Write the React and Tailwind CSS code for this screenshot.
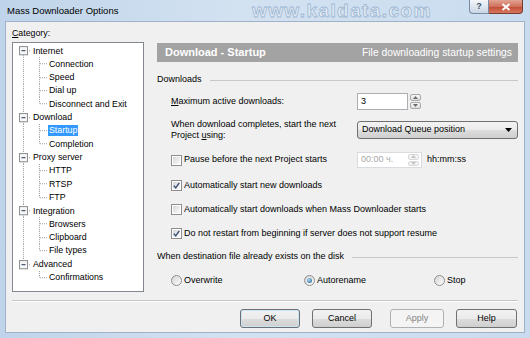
import React from "react";

const tree = [
  { label: "Internet", children: ["Connection", "Speed", "Dial up", "Disconnect and Exit"] },
  { label: "Download", children: ["Startup", "Completion"] },
  { label: "Proxy server", children: ["HTTP", "RTSP", "FTP"] },
  { label: "Integration", children: ["Browsers", "Clipboard", "File types"] },
  { label: "Advanced", children: ["Confirmations"] },
];

// tree gutter pieces
function RootCell({ first, last }) {
  return (
    <svg viewBox="0 0 16 13" preserveAspectRatio="none" className="h-full w-[16px] shrink-0">
      <line x1="8.5" y1={first ? 6.5 : 0} x2="8.5" y2={last ? 6.5 : 13} stroke="#a0a0a0" strokeDasharray="1 1" />
      <line x1="12" y1="6.5" x2="16" y2="6.5" stroke="#a0a0a0" strokeDasharray="1 1" />
      <rect x="4.5" y="2.5" width="8" height="8" fill="#f6f6f6" stroke="#8e8f8f" />
      <line x1="6.5" y1="6.5" x2="10.5" y2="6.5" stroke="#2a3d5a" />
    </svg>
  );
}

function PassCell({ show }) {
  return (
    <svg viewBox="0 0 16 13" preserveAspectRatio="none" className="h-full w-[16px] shrink-0">
      {show && <line x1="8.5" y1="0" x2="8.5" y2="13" stroke="#a0a0a0" strokeDasharray="1 1" />}
    </svg>
  );
}

function ChildCell({ last }) {
  return (
    <svg viewBox="0 0 17 13" preserveAspectRatio="none" className="h-full w-[17px] shrink-0">
      <line x1="8.5" y1="0" x2="8.5" y2={last ? 6.5 : 13} stroke="#a0a0a0" strokeDasharray="1 1" />
      <line x1="9" y1="6.5" x2="16" y2="6.5" stroke="#a0a0a0" strokeDasharray="1 1" />
    </svg>
  );
}

function Check({ checked }) {
  return (
    <span className="flex h-[11px] w-[11px] shrink-0 border border-[#8f8f8f] bg-white p-[1px]">
      <span className="flex h-full w-full items-center justify-center bg-gradient-to-br from-[#d8d8d8] to-[#fafafa]">
        {checked && (
          <svg width="7" height="7" viewBox="0 0 7 7">
            <path d="M0.8 3.6 L2.7 5.8 L6.3 0.8" fill="none" stroke="#3a4f78" strokeWidth="1.4" />
          </svg>
        )}
      </span>
    </span>
  );
}

function Radio({ on }) {
  return (
    <span className="flex h-[11px] w-[11px] shrink-0 items-center justify-center rounded-full border border-[#8f8f8f] bg-gradient-to-br from-[#d6d6d6] to-[#fbfbfb]">
      {on && <span className="h-[5px] w-[5px] rounded-full bg-[radial-gradient(circle_at_35%_35%,#a9dcf6,#1b5a8a)]" />}
    </span>
  );
}

function Spin({ faded }) {
  const c = faded ? "#c4c4c4" : "#6b6b6b";
  return (
    <div className="flex h-full w-[11px] flex-col gap-[1px]">
      {[0, 1].map((i) => (
        <div
          key={i}
          className={
            faded
              ? "flex flex-1 items-center justify-center rounded-[2px] border border-[#d9d9d9] bg-[#f4f4f4]"
              : "flex flex-1 items-center justify-center rounded-[2px] border border-[#a9a9a9] bg-gradient-to-b from-[#f6f6f6] to-[#dedede]"
          }
        >
          <svg width="5" height="3" viewBox="0 0 5 3">
            <path d={i === 0 ? "M0 3 L2.5 0 L5 3 Z" : "M0 0 L2.5 3 L5 0 Z"} fill={c} />
          </svg>
        </div>
      ))}
    </div>
  );
}

function Btn({ children, className }) {
  return (
    <div
      className={
        "flex h-[19px] items-center justify-center rounded-[3px] border border-[#707070] bg-[linear-gradient(#f2f2f2_0%,#ebebeb_50%,#dddddd_50%,#cfcfcf_100%)] " +
        className
      }
    >
      {children}
    </div>
  );
}

export default function App() {
  return (
    <div className="flex h-[338px] w-[530px] flex-col overflow-hidden bg-[linear-gradient(90deg,#bfd4ea,#d3e2f1_45%,#c9dcef)] font-['Liberation_Sans',Arial,sans-serif] text-[8.8px] text-black">
      {/* title bar */}
      <div className="flex h-[21px] shrink-0 items-start">
        <span className="w-[252px] shrink-0 pl-[7px] pt-[5px] text-[9.5px] leading-[12px]">Mass Downloader Options</span>
        <span className="text-[19px] leading-[21px] font-bold tracking-[1.4px] text-[#e4ecf5] [-webkit-text-stroke:0.8px_#9cb6d2]">
          www.kaldata.com
        </span>
        <div className="ml-auto mr-[7px] flex h-[14px]">
          <div className="flex w-[20px] items-center justify-center rounded-bl-[4px] border border-t-0 border-[#7a8ba3] bg-gradient-to-b from-[#f3f6fa] to-[#c9d5e4] text-[9px] font-bold leading-none text-[#3e4f66]">
            ?
          </div>
          <div className="flex w-[34px] items-center justify-center rounded-br-[4px] border border-l-0 border-t-0 border-[#7a3b32] bg-[linear-gradient(#e3a392_0%,#d0705d_50%,#c04a33_51%,#d6785e_100%)]">
            <svg width="10" height="8" viewBox="0 0 10 8">
              <path d="M1.5 1 L8.5 7 M8.5 1 L1.5 7" stroke="#ffffff" strokeWidth="2" />
            </svg>
          </div>
        </div>
      </div>

      {/* client area */}
      <div className="mx-[5px] mb-[5px] flex flex-1 flex-col border border-[#9fb2c7] bg-[#f0f0f0] px-[6px] pt-[5px]">
        <div className="flex">
          {/* category tree */}
          <div className="flex w-[132px] shrink-0 flex-col">
            <div className="h-[12px] leading-[12px]">
              <span className="underline">C</span>ategory:
            </div>
            <div className="mt-[3px] flex h-[250px] flex-col border border-[#828790] bg-white pl-[2px] pt-[1px]">
              {tree.map((node, ni) => (
                <React.Fragment key={node.label}>
                  <div className="flex h-[13.35px] items-center">
                    <RootCell first={ni === 0} last={ni === tree.length - 1} />
                    <span className="ml-[2px] leading-[12px]">{node.label}</span>
                  </div>
                  {node.children.map((c, ci) => (
                    <div key={c} className="flex h-[13.35px] items-center">
                      <PassCell show={ni !== tree.length - 1} />
                      <ChildCell last={ci === node.children.length - 1} />
                      <span
                        className={
                          c === "Startup"
                            ? "bg-[#3399ff] px-[1px] leading-[11px] text-white"
                            : "px-[1px] leading-[11px]"
                        }
                      >
                        {c}
                      </span>
                    </div>
                  ))}
                </React.Fragment>
              ))}
            </div>
          </div>

          {/* settings page */}
          <div className="ml-[13px] mt-[16px] flex flex-1 flex-col text-[9px]">
            <div className="flex h-[19px] items-center justify-between bg-[#a3a3a3] pl-[8px] pr-[6px] text-white">
              <span className="text-[11px] font-bold">Download - Startup</span>
              <span className="text-[10.3px]">File downloading startup settings</span>
            </div>

            <div className="mt-[12px] flex h-[12px] items-center">
              <span>Downloads</span>
              <div className="ml-[8px] h-0 flex-1 border-t border-[#c8c8c8]" />
            </div>

            <div className="mt-[7px] flex h-[17px] items-center pl-[14px]">
              <span className="w-[186px]">
                <span className="underline">M</span>aximum active downloads:
              </span>
              <div className="flex h-full w-[51px] items-center border border-[#abadb3] bg-white pl-[3px]">3</div>
              <div className="ml-[2px] h-full py-[1px]">
                <Spin />
              </div>
            </div>

            <div className="mt-[9px] flex h-[22px] items-start pl-[14px]">
              <span className="w-[186px] leading-[11px]">
                When download completes, start the next
                <br />
                Project <span className="underline">u</span>sing:
              </span>
              <div className="mt-[2px] flex h-[18px] flex-1 items-center justify-between rounded-[3px] border border-[#707070] bg-[linear-gradient(#f2f2f2_0%,#ebebeb_50%,#dddddd_50%,#cfcfcf_100%)] pl-[4px] pr-[5px]">
                <span>Download Queue position</span>
                <svg width="7" height="4" viewBox="0 0 7 4">
                  <path d="M0 0 L7 0 L3.5 4 Z" fill="#000" />
                </svg>
              </div>
            </div>

            <div className="mt-[11px] flex h-[16px] items-center pl-[14px]">
              <div className="flex w-[186px] items-center">
                <Check />
                <span className="ml-[2px]">Pause before the next Project starts</span>
              </div>
              <div className="flex h-full w-[65px] items-center justify-between border border-[#d9dbe0] bg-white pl-[3px] pr-[2px] text-[#a8a8a8]">
                <span>00:00 ч.</span>
                <div className="h-full py-[1px]">
                  <Spin faded />
                </div>
              </div>
              <span className="ml-[5px]">hh:mm:ss</span>
            </div>

            <div className="mt-[11px] flex h-[13px] items-center pl-[14px]">
              <Check checked />
              <span className="ml-[2px]">Automatically start new downloads</span>
            </div>

            <div className="mt-[11px] flex h-[13px] items-center pl-[14px]">
              <Check />
              <span className="ml-[2px]">Automatically start downloads when Mass Downloader starts</span>
            </div>

            <div className="mt-[11px] flex h-[13px] items-center pl-[14px]">
              <Check checked />
              <span className="ml-[2px]">Do not restart from beginning if server does not support resume</span>
            </div>

            <div className="mt-[11px] flex h-[12px] items-center">
              <span>When destination file already exists on the disk</span>
              <div className="ml-[8px] h-0 flex-1 border-t border-[#c8c8c8]" />
            </div>

            <div className="mt-[11px] flex h-[13px] items-center pl-[14px]">
              <div className="flex w-[133px] items-center">
                <Radio />
                <span className="ml-[2px]">Overwrite</span>
              </div>
              <div className="flex w-[130px] items-center">
                <Radio on />
                <span className="ml-[2px]">Autorename</span>
              </div>
              <div className="flex items-center">
                <Radio />
                <span className="ml-[2px]">Stop</span>
              </div>
            </div>
          </div>
        </div>

        <div className="mt-[8px] h-[2px] border-t border-b border-t-[#c6c6c6] border-b-white" />

        <div className="mt-[7px] flex justify-end pr-[1px] text-[9px]">
          <Btn className="w-[60px] border-[#3c7fb1] shadow-[inset_0_0_0_1px_#c5e6f8]">OK</Btn>
          <Btn className="ml-[12px] w-[60px]">Cancel</Btn>
          <div className="ml-[18px] flex h-[19px] w-[54px] items-center justify-center rounded-[3px] border border-[#adb2b5] bg-[#f4f4f4] text-[#838383]">
            Apply
          </div>
          <Btn className="ml-[12px] w-[61px]">Help</Btn>
        </div>
      </div>
    </div>
  );
}
